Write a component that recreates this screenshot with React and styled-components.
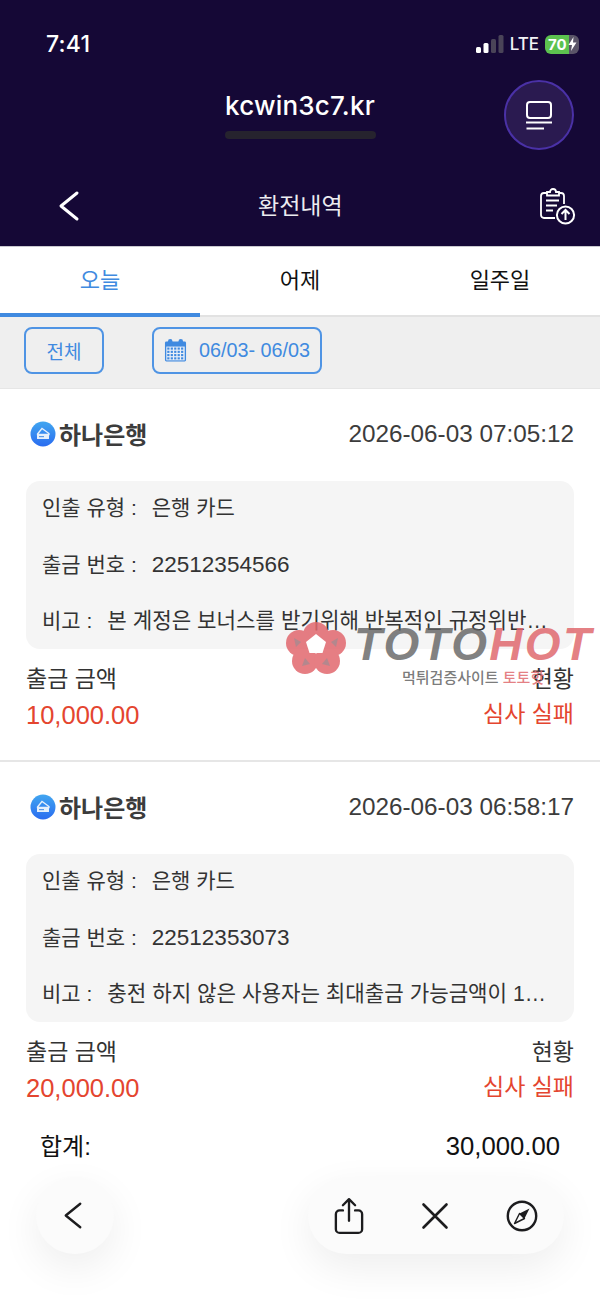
import styled, { createGlobalStyle } from "styled-components";

const GlobalStyle = createGlobalStyle`
    html, body {
        margin: 0;
        padding: 0;
        background: #fff;
    }
    * {
        box-sizing: border-box;
    }
`;

const Page = styled.div`
    position: relative;
    width: 600px;
    height: 1299px;
    overflow: hidden;
    background: #fff;
    font-family: "Liberation Sans", "Noto Sans CJK KR", sans-serif;
`;

const Header = styled.header`
    height: 247px;
    background: #150836;
    color: #fff;
    display: flex;
    flex-direction: column;
    border-bottom: 1px solid #c9c9cf;
`;

const StatusBar = styled.div`
    display: flex;
    justify-content: space-between;
    align-items: center;
    height: 30px;
    margin-top: 29px;
    padding: 0 21px 0 46px;
`;

const Clock = styled.span`
    font-family: Inter, sans-serif;
    font-size: 23px;
    font-weight: 500;
    letter-spacing: 0.2px;
`;

const StatusRight = styled.div`
    display: flex;
    align-items: center;
    gap: 6px;
`;

const Lte = styled.span`
    font-family: Inter, sans-serif;
    font-size: 17px;
    font-weight: 500;
    color: #f2f2f5;
`;

const Battery = styled.div`
    width: 34px;
    height: 19px;
    border-radius: 6px;
    background: linear-gradient(90deg, #5cc24f 0 70%, #5a5468 70% 100%);
    font-family: Inter, sans-serif;
    font-size: 15px;
    font-weight: 700;
    line-height: 19px;
    padding-left: 3px;
    display: flex;
    align-items: center;
`;

const AddressRow = styled.div`
    position: relative;
    display: flex;
    justify-content: center;
    height: 106px;
`;

const AddressBlock = styled.div`
    display: flex;
    flex-direction: column;
    align-items: center;
    margin-top: 31px;
`;

const Domain = styled.div`
    font-family: Inter, sans-serif;
    font-size: 26px;
    font-weight: 500;
    line-height: 32px;
    letter-spacing: 0.2px;
`;

const LoadBar = styled.div`
    width: 151px;
    height: 8px;
    margin-top: 9px;
    border-radius: 4px;
    background: #26232e;
`;

const RoundButton = styled.div`
    position: absolute;
    top: 21px;
    left: 504px;
    width: 70px;
    height: 70px;
    border-radius: 50%;
    background: #2a1a50;
    border: 2px solid #4a31a6;
    display: flex;
    align-items: center;
    justify-content: center;
`;

const NavRow = styled.div`
    flex: 1;
    display: grid;
    grid-template-columns: 200px auto 1fr;
    align-items: center;
    padding: 0 22px 0 58px;
`;

const NavEnd = styled.div`
    display: flex;
    justify-content: flex-end;
`;

const NavTitle = styled.div`
    font-size: 23px;
    color: #ececf0;
    margin-top: -3px;
`;

const Tabs = styled.nav`
    display: flex;
    height: 70px;
    background: #fff;
    border-bottom: 2px solid #e2e2e2;
`;

const Tab = styled.div`
    flex: 1;
    display: flex;
    align-items: center;
    justify-content: center;
    font-size: 22px;
    color: ${(p) => (p.$active ? "#408ae0" : "#111")};
    padding-bottom: 5px;
    margin-bottom: -2px;
    border-bottom: 4px solid ${(p) => (p.$active ? "#408ae0" : "transparent")};
`;

const FilterBar = styled.div`
    display: flex;
    align-items: center;
    gap: 48px;
    height: 72px;
    padding: 0 24px 4px;
    background: #efefef;
    border-bottom: 1px solid #e6e6e6;
`;

const FilterButton = styled.div`
    height: 47px;
    display: flex;
    align-items: center;
    justify-content: center;
    gap: 12px;
    width: ${(p) => p.$width}px;
    border: 2px solid #4f94e4;
    border-radius: 8px;
    font-size: 19px;
    color: #408ae0;
`;

const DateText = styled.span`
    font-size: 19.8px;
`;

const Card = styled.section`
    height: ${(p) => p.$height}px;
    padding: 0 26px;
    border-bottom: ${(p) => (p.$last ? "none" : "2px solid #e6e6e6")};
    display: flex;
    flex-direction: column;
`;

const CardTop = styled.div`
    display: flex;
    align-items: center;
    justify-content: space-between;
    height: 92px;
    padding-bottom: 3px;
`;

const Bank = styled.div`
    display: flex;
    align-items: center;
    gap: 3px;
    margin-left: 4px;
    font-size: 24px;
    font-weight: 700;
    color: #3c3c3c;
`;

const Stamp = styled.div`
    font-size: 24.3px;
    color: #3c3c3c;
`;

const InfoBox = styled.div`
    height: 168px;
    padding: 12px 16px 0;
    border-radius: 14px;
    background: #f5f5f5;
    display: flex;
    flex-direction: column;
    gap: 26.5px;
`;

const InfoLine = styled.div`
    display: flex;
    align-items: baseline;
    font-size: 21px;
    line-height: 30px;
    color: #333;
    white-space: nowrap;
`;

const InfoLabel = styled.span`
    margin-right: 15px;
`;

const InfoNumber = styled.span`
    font-size: 22.5px;
`;

const InfoMemo = styled.span`
    font-size: 21.2px;
`;

const AmountGrid = styled.div`
    display: grid;
    grid-template-columns: 1fr auto;
    row-gap: 10px;
    margin-top: 17px;
    font-size: 23px;
    line-height: 26px;
    color: #333;
`;

const Amount = styled.div`
    font-size: 25.5px;
    color: #e4452f;
`;

const Status = styled.div`
    font-size: 23px;
    color: #e4452f;
    text-align: right;
    margin-top: -1px;
`;

const RightText = styled.div`
    text-align: right;
`;

const TotalRow = styled.div`
    display: flex;
    align-items: baseline;
    justify-content: space-between;
    padding: 3px 40px 0;
    font-size: 24px;
    color: #111;
`;

const TotalValue = styled.span`
    font-size: 25.7px;
`;

const Watermark = styled.div`
    position: absolute;
    top: 620px;
    left: 284px;
    width: 316px;
    height: 70px;
    pointer-events: none;
`;

const FlowerBox = styled.svg`
    position: absolute;
    left: 1px;
    top: 0;
`;

const WatermarkLogo = styled.div`
    position: absolute;
    left: 70px;
    top: 0;
    font-size: 46px;
    font-weight: 700;
    font-style: italic;
    letter-spacing: 2.3px;
    line-height: 48px;
    white-space: nowrap;
    color: rgba(95, 95, 95, 0.78);
`;

const WatermarkHot = styled.span`
    color: rgba(224, 105, 110, 0.85);
`;

const WatermarkCaption = styled.div`
    position: absolute;
    left: 118px;
    top: 46px;
    font-size: 15px;
    font-weight: 500;
    white-space: nowrap;
    color: rgba(100, 100, 100, 0.85);
`;

const FloatPill = styled.div`
    position: absolute;
    top: 1177px;
    left: ${(p) => p.$left}px;
    width: ${(p) => p.$width}px;
    height: 77px;
    border-radius: 39px;
    background: #fbfbfb;
    box-shadow: 0 14px 40px rgba(0, 0, 0, 0.07);
    display: flex;
    align-items: center;
    justify-content: space-between;
    padding: 0 ${(p) => p.$right}px 0 ${(p) => p.$pad}px;
`;

function Signal() {
    return (
        <svg width="28" height="20" viewBox="0 0 28 20">
            <rect x="0" y="13" width="5" height="6" rx="1.5" fill="#fff" />
            <rect x="7.5" y="9" width="5" height="10" rx="1.5" fill="#fff" />
            <rect x="15" y="5" width="5" height="14" rx="1.5" fill="#4a4458" />
            <rect x="22.5" y="1" width="5" height="18" rx="1.5" fill="#4a4458" />
        </svg>
    );
}

function Bolt() {
    return (
        <svg width="9" height="14" viewBox="0 0 9 14" style={{ marginLeft: 1 }}>
            <path d="M5.5 0 L0.5 8 H4 L3 14 L8.5 5.5 H5 Z" fill="#fff" />
        </svg>
    );
}

function PanelIcon() {
    return (
        <svg width="28" height="30" viewBox="0 0 28 30" fill="none" stroke="#fff" strokeWidth="2">
            <rect x="2" y="2" width="24" height="16" rx="3" />
            <path d="M1 22.5 H27" />
            <path d="M1.5 28.5 H19" />
        </svg>
    );
}

function ClipboardUp() {
    return (
        <svg width="38" height="38" viewBox="0 0 38 38" fill="none" stroke="#fff" strokeWidth="1.8">
            <path d="M15 31 H4 a3 3 0 0 1 -3 -3 V9 a3 3 0 0 1 3 -3 H7 M19 6 H21 a3 3 0 0 1 3 3 V17" />
            <path d="M7 8.5 V5 H10 a3 3 0 0 1 6 0 H19 V8.5 Z" />
            <path d="M6 13.5 H19 M6 18.5 H17 M6 23.5 H13" />
            <circle cx="25.5" cy="28" r="8.6" strokeWidth="2" />
            <path d="M25.5 33 V23.5 M21.5 27 L25.5 23 L29.5 27" strokeWidth="2" />
        </svg>
    );
}

function CalendarIcon() {
    const cells = [];
    for (let r = 0; r < 4; r++) {
        for (let c = 0; c < 5; c++) {
            cells.push(<rect key={`${r}-${c}`} x={3.4 + c * 3.6} y={9.4 + r * 3.4} width="2.3" height="2.2" fill="#408ae0" />);
        }
    }
    return (
        <svg width="23" height="25" viewBox="0 0 24 25">
            <rect x="1" y="3" width="22" height="21" rx="1.5" fill="#408ae0" />
            <rect x="2.4" y="8.4" width="19.2" height="14.4" fill="#e9eff7" />
            {cells}
            <circle cx="6.5" cy="3" r="2.4" fill="#408ae0" />
            <circle cx="17.5" cy="3" r="2.4" fill="#408ae0" />
        </svg>
    );
}

function BankIcon({ id }) {
    return (
        <svg width="26" height="26" viewBox="0 0 26 26">
            <defs>
                <linearGradient id={id} x1="0" y1="0" x2="0" y2="1">
                    <stop offset="0" stopColor="#41a6f0" />
                    <stop offset="1" stopColor="#2a6cf0" />
                </linearGradient>
            </defs>
            <circle cx="13" cy="13" r="12.5" fill={`url(#${id})`} />
            <path d="M7.5 13 L12 7.5 L19 12.5 V13.5 H7.5 Z" fill="none" stroke="#e6f0fb" strokeWidth="1.3" />
            <rect x="7" y="13" width="12" height="5" rx="0.5" fill="#e6f0fb" />
            <rect x="9" y="15" width="5" height="1.2" fill="#5c9be8" />
        </svg>
    );
}

function ShareIcon() {
    return (
        <svg width="30" height="38" viewBox="0 0 32 40" fill="none" stroke="#1c1c1e" strokeWidth="2.5" strokeLinecap="round" strokeLinejoin="round">
            <path d="M9.5 14 H6 a4 4 0 0 0 -4 4 V34 a4 4 0 0 0 4 4 H26 a4 4 0 0 0 4 -4 V18 a4 4 0 0 0 -4 -4 H22.5" />
            <path d="M16 25 V2.5 M9.5 8.5 L16 2 L22.5 8.5" />
        </svg>
    );
}

function CloseIcon() {
    return (
        <svg width="28" height="28" viewBox="0 0 28 28" fill="none" stroke="#1c1c1e" strokeWidth="2.6" strokeLinecap="round">
            <path d="M2.5 2.5 L25.5 25.5 M25.5 2.5 L2.5 25.5" />
        </svg>
    );
}

function CompassIcon() {
    return (
        <svg width="32" height="32" viewBox="0 0 32 32">
            <circle cx="16" cy="16" r="14.2" fill="none" stroke="#1c1c1e" strokeWidth="2.4" />
            <path d="M23.5 8.5 L18.5 18.5 L13.5 13.5 Z" fill="#1c1c1e" />
            <path d="M8.5 23.5 L13.5 13.5 L18.5 18.5 Z" fill="none" stroke="#1c1c1e" strokeWidth="1.4" strokeLinejoin="round" />
        </svg>
    );
}

function BackChevron({ color, width, height, stroke }) {
    return (
        <svg width={width} height={height} viewBox="0 0 22 32" fill="none" stroke={color} strokeWidth={stroke} strokeLinecap="round" strokeLinejoin="round">
            <path d="M19 3 L3 16 L19 29" />
        </svg>
    );
}

function WatermarkFlower() {
    return (
        <FlowerBox width="62" height="56" viewBox="0 0 62 56">
            <g opacity="0.85" fill="#e2686e">
                <circle cx="31" cy="15" r="13" />
                <circle cx="14" cy="23" r="13" />
                <circle cx="48" cy="23" r="13" />
                <circle cx="20" cy="41" r="13" />
                <circle cx="42" cy="41" r="13" />
            </g>
            <g fill="#a88a90" opacity="0.8">
                <path d="M9 18 L16 22 L11 27 Z" />
                <path d="M53 18 L46 22 L51 27 Z" />
                <path d="M20 38 L25 44 L17 46 Z" />
                <path d="M42 38 L37 44 L45 46 Z" />
            </g>
            <path d="M31 14 L41 22 L37.5 33 H24.5 L21 22 Z" fill="#fff" />
        </FlowerBox>
    );
}

const records = [
    {
        stamp: "2026-06-03 07:05:12",
        no: "22512354566",
        memo: "본 계정은 보너스를 받기위해 반복적인 규정위반…",
        amount: "10,000.00",
        height: 373,
    },
    {
        stamp: "2026-06-03 06:58:17",
        no: "22512353073",
        memo: "충전 하지 않은 사용자는 최대출금 가능금액이 1…",
        amount: "20,000.00",
        height: 362,
    },
];

function RecordCard({ record, last }) {
    return (
        <Card $height={record.height} $last={last}>
            <CardTop>
                <Bank>
                    <BankIcon id={`bank-${record.no}`} />
                    하나은행
                </Bank>
                <Stamp>{record.stamp}</Stamp>
            </CardTop>
            <InfoBox>
                <InfoLine>
                    <InfoLabel>인출 유형 :</InfoLabel>
                    <span>은행 카드</span>
                </InfoLine>
                <InfoLine>
                    <InfoLabel>출금 번호 :</InfoLabel>
                    <InfoNumber>{record.no}</InfoNumber>
                </InfoLine>
                <InfoLine>
                    <InfoLabel>비고 :</InfoLabel>
                    <InfoMemo>{record.memo}</InfoMemo>
                </InfoLine>
            </InfoBox>
            <AmountGrid>
                <div>출금 금액</div>
                <RightText>현황</RightText>
                <Amount>{record.amount}</Amount>
                <Status>심사 실패</Status>
            </AmountGrid>
        </Card>
    );
}

function App() {
    return (
        <Page>
            <GlobalStyle />
            <Header>
                <StatusBar>
                    <Clock>7:41</Clock>
                    <StatusRight>
                        <Signal />
                        <Lte>LTE</Lte>
                        <Battery>
                            70
                            <Bolt />
                        </Battery>
                    </StatusRight>
                </StatusBar>
                <AddressRow>
                    <AddressBlock>
                        <Domain>kcwin3c7.kr</Domain>
                        <LoadBar />
                    </AddressBlock>
                    <RoundButton>
                        <PanelIcon />
                    </RoundButton>
                </AddressRow>
                <NavRow>
                    <BackChevron color="#fff" width={22} height={32} stroke={3} />
                    <NavTitle>환전내역</NavTitle>
                    <NavEnd>
                        <ClipboardUp />
                    </NavEnd>
                </NavRow>
            </Header>
            <Tabs>
                <Tab $active>오늘</Tab>
                <Tab>어제</Tab>
                <Tab>일주일</Tab>
            </Tabs>
            <FilterBar>
                <FilterButton $width={80}>전체</FilterButton>
                <FilterButton $width={170}>
                    <CalendarIcon />
                    <DateText>06/03- 06/03</DateText>
                </FilterButton>
            </FilterBar>
            {records.map((record, i) => (
                <RecordCard key={record.no} record={record} last={i === records.length - 1} />
            ))}
            <TotalRow>
                <span>합계:</span>
                <TotalValue>30,000.00</TotalValue>
            </TotalRow>
            <Watermark>
                <WatermarkFlower />
                <WatermarkLogo>
                    TOTO<WatermarkHot>HOT</WatermarkHot>
                </WatermarkLogo>
                <WatermarkCaption>
                    먹튀검증사이트 <WatermarkHot>토토핫</WatermarkHot>
                </WatermarkCaption>
            </Watermark>
            <FloatPill $left={36} $width={78} $pad={27} $right={31}>
                <BackChevron color="#1c1c1e" width={20} height={29} stroke={2.6} />
            </FloatPill>
            <FloatPill $left={308} $width={256} $pad={26} $right={26}>
                <ShareIcon />
                <CloseIcon />
                <CompassIcon />
            </FloatPill>
        </Page>
    );
}

export default App;
